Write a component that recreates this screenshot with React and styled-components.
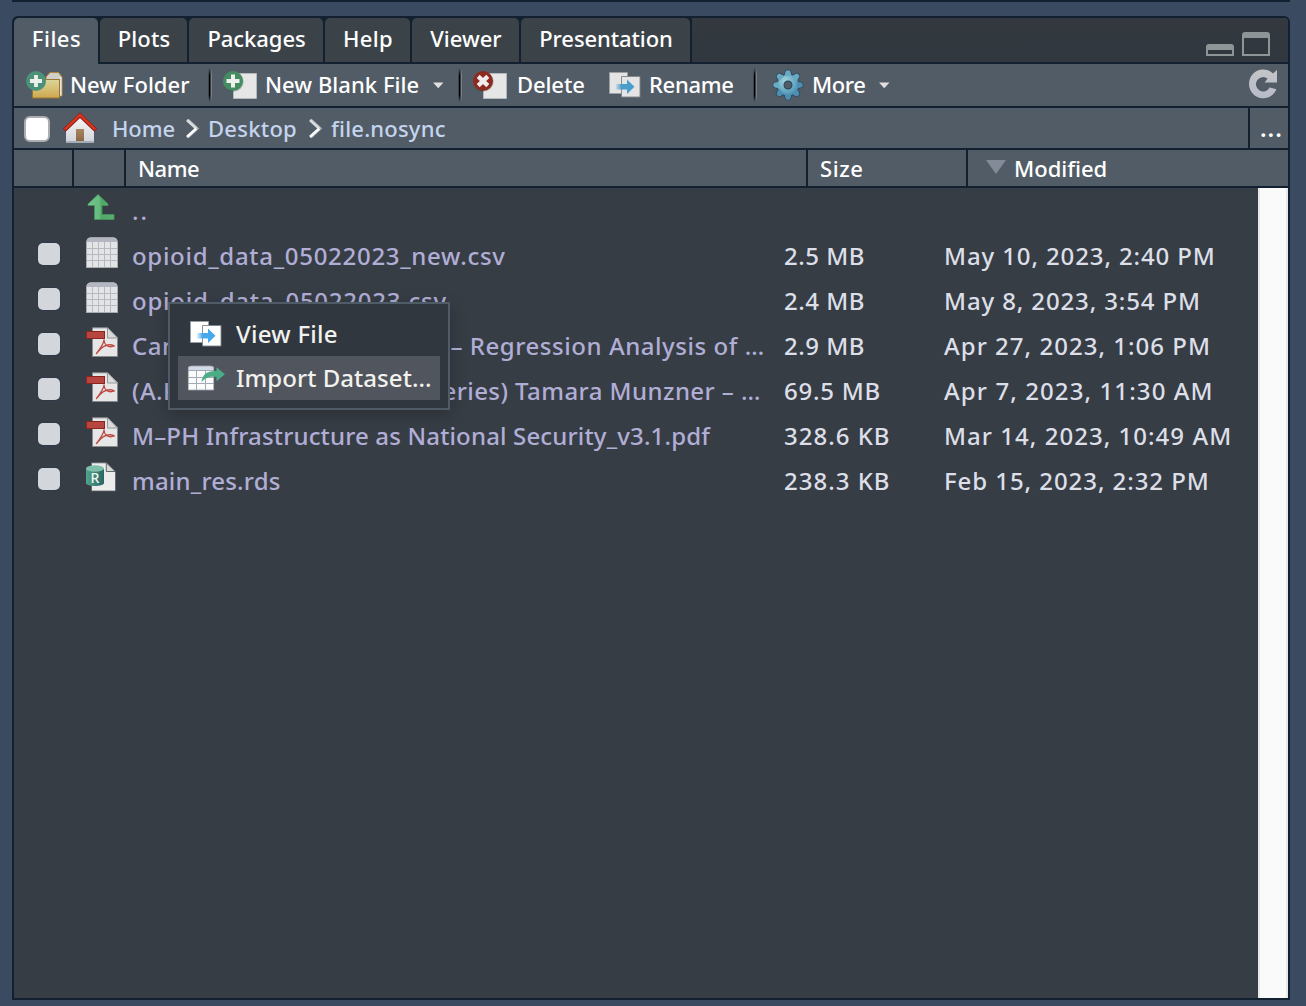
import React from 'react';
import styled, { createGlobalStyle } from 'styled-components';

const LINE = '#13202f';
const BAR = '#525c66';

const Global = createGlobalStyle`
  *, *::before, *::after { box-sizing: border-box; }
  html, body { margin: 0; padding: 0; background: #3a4b61; }
  body { font-family: "Noto Sans", "Open Sans", sans-serif; overflow: hidden; }
  svg { display: block; flex: none; overflow: visible; }
`;

const Screen = styled.div`
  width: 1306px;
  height: 1006px;
  padding-left: 12px;
  display: flex;
  flex-direction: column;
  background: #3a4b61;
`;

const UpperPaneEdge = styled.div`
  width: 1278px;
  height: 2px;
  margin-bottom: 14px;
  background: ${LINE};
`;

const Pane = styled.section`
  width: 1278px;
  height: 984px;
  display: flex;
  flex-direction: column;
  border: 2px solid ${LINE};
  border-radius: 6px 6px 0 0;
  background: #373d45;
`;

/* ---- tabs ---- */
const TabStrip = styled.nav`
  display: flex;
  height: 46px;
  background: linear-gradient(#33393f, #30373e);
  border-radius: 4px 4px 0 0;
`;

const TabSlot = styled.div`
  display: flex;
  width: ${(p) => p.$w + 2}px;
  padding-right: 2px;
  padding-bottom: ${(p) => (p.$active ? 0 : 2)}px;
  background: ${LINE};
`;

const Tab = styled.div`
  flex: 1;
  height: ${(p) => (p.$active ? 46 : 44)}px;
  padding-left: 1px;
  padding-bottom: ${(p) => (p.$active ? 7 : 5)}px;
  display: flex;
  align-items: center;
  justify-content: center;
  border-radius: 5px 5px 0 0;
  background: ${(p) => (p.$active ? BAR : '#3b4349')};
  color: #fff;
  font-size: 22px;
  font-weight: 500;
  line-height: 30px;
  letter-spacing: ${(p) => p.$ls}px;
  white-space: nowrap;
`;

const StripEnd = styled.div`
  flex: 1;
  display: flex;
  justify-content: flex-end;
  align-items: flex-start;
  gap: 8px;
  padding: 14px 18px 0 0;
  border-bottom: 2px solid ${LINE};
`;

/* ---- toolbar ---- */
const Toolbar = styled.div`
  height: 44px;
  display: flex;
  align-items: center;
  padding-left: 12px;
  background: ${BAR};
  border-bottom: 2px solid ${LINE};
`;

const ToolButton = styled.div`
  display: grid;
  grid-template-columns: ${(p) => p.$icon}px ${(p) => p.$text}px auto;
  align-items: center;
  height: 42px;
  margin-right: ${(p) => p.$gap || 0}px;
`;

const ToolLabel = styled.span`
  padding-bottom: 2px;
  color: #fff;
  font-size: 22px;
  font-weight: 500;
  line-height: 30px;
  letter-spacing: ${(p) => p.$ls || 0}px;
  white-space: nowrap;
`;

const Separator = styled.div`
  width: 4px;
  height: 34px;
  margin-right: ${(p) => p.$gap}px;
  background: linear-gradient(90deg, rgba(0,0,0,.25) 0 1px, #000 1px 2px, rgba(0,0,0,.35) 2px 3px, rgba(255,255,255,.22) 3px 4px);
  mask-image: linear-gradient(transparent, #000 22%, #000 80%, transparent);
`;

const RefreshSlot = styled.div`
  margin-left: auto;
  padding: 0 11px 2px 0;
`;

/* ---- breadcrumb ---- */
const PathBar = styled.div`
  height: 42px;
  display: flex;
  align-items: center;
  background: ${BAR};
  border-bottom: 2px solid ${LINE};
`;

const HomeLink = styled.div`
  display: grid;
  grid-template-columns: 49px 74px;
  align-items: center;
`;

const SelectAll = styled.div`
  width: 26px;
  height: 26px;
  margin: 2px 13px 0 10px;
  background: #fff;
  border: 2px solid #adadad;
  border-radius: 6px;
`;

const Crumb = styled.span`
  width: ${(p) => p.$w}px;
  color: #c4d4ee;
  font-size: 22px;
  font-weight: 500;
  line-height: 30px;
  letter-spacing: ${(p) => p.$ls}px;
  white-space: nowrap;
`;

const BrowseButton = styled.div`
  width: 40px;
  height: 40px;
  margin-left: auto;
  padding: 8px 0 0 10px;
  border-left: 2px solid ${LINE};
  color: #fff;
  font-size: 24px;
  font-weight: 600;
  line-height: 24px;
  letter-spacing: 1px;
`;

/* ---- column header ---- */
const HeaderRow = styled.div`
  display: grid;
  grid-template-columns: 60px 52px 682px 160px 1fr;
  height: 38px;
  background: ${BAR};
  border-bottom: 2px solid ${LINE};
`;

const HeaderCell = styled.div`
  display: flex;
  align-items: center;
  gap: 8px;
  height: 36px;
  padding-left: ${(p) => p.$pad || 0}px;
  border-right: ${(p) => (p.$last ? 'none' : `2px solid ${LINE}`)};
  color: #fff;
  font-size: 22px;
  font-weight: 500;
  line-height: 30px;
  letter-spacing: ${(p) => p.$ls || 0}px;
`;

/* ---- listing ---- */
const Body = styled.div`
  flex: 1;
  display: flex;
  min-height: 0;
`;

const Listing = styled.div`
  position: relative;
  flex: 1;
`;

const ScrollTrack = styled.div`
  width: 30px;
  background: #fafafa;
  border: solid #e8e8e8;
  border-width: 0 2px;
`;

const Row = styled.div`
  display: grid;
  grid-template-columns: 72px 46px 652px 159px 1fr;
  height: 45px;
  align-items: start;
  font-size: 24px;
  font-weight: 500;
  line-height: 45px;
`;

const Check = styled.div`
  width: 22px;
  height: 22px;
  margin: 10px 0 0 24px;
  border-radius: 5px;
  background: #d3d7dc;
  box-shadow: 0 0 0 1px #2f3949;
`;

const IconCell = styled.div`
  padding-top: 4px;
`;

const FileName = styled.div`
  color: #b1aed6;
  letter-spacing: ${(p) => p.$ls}px;
  white-space: pre;
`;

const Meta = styled.div`
  padding-left: ${(p) => p.$pad || 0}px;
  color: #dcdfe8;
  letter-spacing: ${(p) => p.$ls}px;
  white-space: pre;
`;

/* ---- context menu ---- */
const Menu = styled.div`
  position: absolute;
  left: 154px;
  top: 114px;
  width: 282px;
  height: 108px;
  padding: 8px;
  border: 2px solid #4f5b66;
  background: #30373f;
  box-shadow: 0 4px 16px rgba(0, 0, 0, .22);
`;

const MenuItem = styled.div`
  height: 44px;
  display: grid;
  grid-template-columns: ${(p) => 58 - p.$pad}px 1fr;
  align-items: center;
  padding-left: ${(p) => p.$pad}px;
  background: ${(p) => (p.$active ? '#51555d' : 'transparent')};
  color: #f1f1ee;
  font-size: 24px;
  font-weight: 500;
  line-height: 44px;
  letter-spacing: ${(p) => p.$ls}px;
  white-space: nowrap;
`;

/* ---- icons ---- */
const MinimizeIcon = () => (
  <svg width="28" height="24" viewBox="0 0 28 24">
    <path d="M0 24V15a3 3 0 0 1 3-3h22a3 3 0 0 1 3 3v9zM2 18v4h24v-4z" fill="#8d9597" fillRule="evenodd" />
  </svg>
);

const MaximizeIcon = () => (
  <svg width="28" height="24" viewBox="0 0 28 24">
    <path d="M0 24V3a3 3 0 0 1 3-3h22a3 3 0 0 1 3 3v21zM2 6v16h24V6z" fill="#8d9597" fillRule="evenodd" />
  </svg>
);

const FolderAddIcon = () => (
  <svg width="38" height="30" viewBox="0 0 38 30">
    <defs>
      <linearGradient id="fold" x1="0" y1="0" x2="0" y2="1">
        <stop offset="0" stopColor="#dcd69a" />
        <stop offset="1" stopColor="#cfa84f" />
      </linearGradient>
    </defs>
    <path d="M20 12V7l4-4.500h8.500l3.500 4.500v19h-3" fill="#d0d0c9" stroke="#b0863a" />
    <path d="M34.500 7v18.500" stroke="#e4e4e0" strokeWidth="2" />
    <rect x="6.500" y="9.500" width="27" height="18.500" fill="url(#fold)" stroke="#99752f" />
    <circle cx="10" cy="11" r="10" fill="#4b9279" />
    <path d="M10 5v12M4 11h12" stroke="#ecf0ed" strokeWidth="3.800" />
  </svg>
);

const FileAddIcon = () => (
  <svg width="34" height="30" viewBox="0 0 34 30">
    <rect x="10.500" y="3.500" width="23" height="25" fill="#e6e6e6" stroke="#b9bdc1" strokeWidth=".8" />
    <circle cx="10.700" cy="11.600" r="10" fill="#000" opacity=".2" />
    <circle cx="10" cy="11" r="10" fill="#458c60" />
    <path d="M10 4.500v13M3.500 11h13" stroke="#eef1ee" strokeWidth="4" />
  </svg>
);

const DeleteIcon = () => (
  <svg width="34" height="30" viewBox="0 0 34 30">
    <rect x="10.500" y="3.500" width="23" height="25" fill="#e6e6e6" stroke="#b9bdc1" strokeWidth=".8" />
    <circle cx="10.700" cy="11.600" r="10" fill="#000" opacity=".2" />
    <circle cx="10" cy="11" r="10" fill="#8d2a20" />
    <path d="M5.200 6.400l9.600 9.200M14.800 6.400l-9.600 9.200" stroke="#f0eceb" strokeWidth="4.300" />
  </svg>
);

const MoveIcon = ({ paper, arrow, id }) => (
  <svg width="32" height="26" viewBox="0 0 32 26">
    <defs>
      <linearGradient id={id} x1="0" y1="0" x2="1" y2="0">
        <stop offset="0" stopColor={arrow} stopOpacity=".15" />
        <stop offset=".3" stopColor={arrow} />
      </linearGradient>
    </defs>
    <path d="M.5 .5h18v21H.5z" fill={paper} stroke="#9aa0a5" strokeWidth=".9" />
    <path d="M12.500 4.500h18.500v20.500h-18.500z" fill={paper} stroke="#7d848a" strokeWidth=".9" />
    <path d="M7 12h11V7.500l7.500 7.300L18 22v-4.500H7z" fill={`url(#${id})`} />
  </svg>
);

const GEAR_TEETH = [0, 45, 90, 135, 180, 225, 270, 315];
const TOOTH = 'M-4-9C-2.600-10.500-3-13-2-14.200Q0-15.400 2-14.200C3-13 2.600-10.500 4-9z';
const GearIcon = () => (
  <svg width="30" height="32" viewBox="-15 -16 30 32">
    <defs>
      <radialGradient id="gear" gradientUnits="userSpaceOnUse" cx="-3" cy="-4" r="19">
        <stop offset="0" stopColor="#a3d3dc" />
        <stop offset=".5" stopColor="#6aabc6" />
        <stop offset="1" stopColor="#3d7fa5" />
      </radialGradient>
    </defs>
    <g fill="#28455a" stroke="#28455a" strokeWidth="1.400" strokeLinejoin="round">
      <circle r="10.300" />
      {GEAR_TEETH.map((a) => (
        <path key={a} transform={`rotate(${a})`} d={TOOTH} />
      ))}
    </g>
    <circle r="10.300" fill="url(#gear)" />
    {GEAR_TEETH.map((a) => (
      <path key={a} transform={`rotate(${a})`} d={TOOTH} fill={a > 60 && a < 240 ? '#4c8fb3' : '#68a9c4'} />
    ))}
    <circle r="3.900" fill="#525c66" stroke="#2d4a5c" strokeWidth="1.200" />
  </svg>
);

const Caret = () => (
  <svg width="11" height="6" viewBox="0 0 11 6">
    <path d="M0 .5h10.500L5.250 6.300z" fill="#e3dde0" />
  </svg>
);

const RefreshIcon = () => (
  <svg width="28" height="30" viewBox="0 0 28 30">
    <defs>
      <linearGradient id="refresh" x1="0" y1="0" x2="0" y2="1">
        <stop offset="0" stopColor="#c3c4c6" />
        <stop offset="1" stopColor="#b7bccb" />
      </linearGradient>
    </defs>
    <path d="M28 1V13.400H15.600L18.600 9.600A7.200 7.200 0 1 0 20.600 18.400L27.400 20.200A14.200 14.400 0 1 1 24 4.400z" fill="url(#refresh)" />
  </svg>
);

const HouseIcon = () => (
  <svg width="34" height="30" viewBox="0 0 34 30">
    <defs>
      <linearGradient id="wall" x1="0" y1="0" x2="0" y2="1">
        <stop offset="0" stopColor="#f6f6f8" />
        <stop offset="1" stopColor="#d3d5dc" />
      </linearGradient>
      <linearGradient id="door" x1="0" y1="0" x2="0" y2="1">
        <stop offset="0" stopColor="#a98763" />
        <stop offset="1" stopColor="#8a6845" />
      </linearGradient>
    </defs>
    <path d="M3 17L17 3.500 31 17v12H3z" fill="url(#wall)" />
    <path d="M3 29h28" stroke="#a5adb8" strokeWidth="2" />
    <rect x="13" y="16" width="8" height="12" fill="url(#door)" />
    <path d="M1.300 17.300L17 2.200l15.700 15.100" fill="none" stroke="#8e1b10" strokeWidth="4" />
    <path d="M1.700 16.700L17 2l15.300 14.700" fill="none" stroke="#d93521" strokeWidth="2.400" />
  </svg>
);

const Chevron = () => (
  <svg width="22" height="20" viewBox="0 0 22 20">
    <path d="M1.500 2l9.300 8.500-9.300 8.500" fill="none" stroke="#a5abb1" strokeWidth="3.400" />
    <path d="M1 2L10.300 10.500" fill="none" stroke="#d9dcdf" strokeWidth="2.400" />
    <path d="M10.300 10.500L1 19" fill="none" stroke="#fff" strokeWidth="2.400" />
  </svg>
);

const SortArrow = () => (
  <svg width="20" height="14" viewBox="0 0 20 14">
    <path d="M0 -1h20L10 13z" fill="#838a98" />
  </svg>
);

const UpIcon = () => (
  <svg width="32" height="30" viewBox="0 0 32 30">
    <defs>
      <linearGradient id="up" x1="0" y1="0" x2="1" y2="0">
        <stop offset="0" stopColor="#76c58f" />
        <stop offset=".45" stopColor="#66b97e" />
        <stop offset=".5" stopColor="#4fa867" />
        <stop offset="1" stopColor="#56b06e" />
      </linearGradient>
    </defs>
    <path d="M12 2.500L22 12v1.500h-6v9h12v5H8.500v-14H2V12z" fill="url(#up)" stroke="#46945c" strokeWidth=".8" />
  </svg>
);

const CsvIcon = () => (
  <svg width="32" height="32" viewBox="0 0 32 32">
    <path d="M.4 31V5a4.500 4.500 0 0 1 4.500-4.500h22.200A4.500 4.500 0 0 1 31.600 5v26z" fill="#e3e4e6" />
    <path d="M.5 5V4.700A4.500 4.500 0 0 1 5 .5h22A4.500 4.500 0 0 1 31.500 4.700V5z" fill="#b4b7c2" />
    <path d="M.5 11.500h31M.5 17.500h31M.5 23.500h31M6.500 5v25M12.500 5v25M18.500 5v25M24.500 5v25" stroke="#b6bac0" />
    <path d="M.5 30.500V5M31.500 30.500V5M0 30.500h32" stroke="#a8acb1" fill="none" />
  </svg>
);

const PdfIcon = () => (
  <svg width="32" height="32" viewBox="0 0 32 32">
    <path d="M6.500 .8H21.500l10 10v18.700h-25z" fill="#e6e6e6" stroke="#878a8c" />
    <path d="M21.500 .8V11h10z" fill="#dadada" stroke="#96999b" />
    <path d="M10.500 26.500c3-4 7.500-10 7.500-13.500 0 4 3.500 8.500 10.500 6-6-3-12-.5-18 7.500z" fill="none" stroke="#bd4942" strokeWidth="1.300" strokeLinejoin="round" />
    <rect x=".5" y="4.500" width="18" height="7" fill="#b84640" stroke="#8c2520" />
  </svg>
);

const RLetter = styled.text`
  font-family: "Noto Sans", sans-serif;
  font-size: 14px;
  fill: #f1f5f3;
`;

const RdsIcon = () => (
  <svg width="32" height="32" viewBox="0 0 32 32">
    <defs>
      <linearGradient id="drum" x1="0" y1="0" x2="1" y2="0">
        <stop offset="0" stopColor="#53a58e" />
        <stop offset=".5" stopColor="#3b8676" />
        <stop offset="1" stopColor="#2b6464" />
      </linearGradient>
    </defs>
    <path d="M5.500 .8H20.500L29.500 10v19h-24z" fill="#ececec" stroke="#5c6063" strokeWidth=".8" />
    <path d="M20.300 .8V9.500h9z" fill="#d8d8d8" stroke="#55595c" strokeWidth=".9" />
    <path d="M0 6.500v14.500c0 4 18 4 18 0V6.500z" fill="url(#drum)" />
    <ellipse cx="9" cy="6.500" rx="9" ry="3.300" fill="#7fc0aa" />
    <RLetter x="4.600" y="20.500">R</RLetter>
  </svg>
);

const ImportIcon = () => (
  <svg width="38" height="26" viewBox="0 0 38 26">
    <path d="M0 25V4a3 3 0 0 1 3-3h20a3 3 0 0 1 3 3v21z" fill="#fbfbfb" />
    <path d="M0 6V4a3 3 0 0 1 3-3h20a3 3 0 0 1 3 3v2z" fill="#d5dbe6" />
    <path d="M0 5.500h26M0 12.500h26M0 18.500h26M8.500 5.500V25M17.500 5.500V25" stroke="#a1abb8" />
    <path d="M.4 25V4a3 3 0 0 1 3-3h19.200a3 3 0 0 1 3 3v21z" fill="none" stroke="#9aa2ac" strokeWidth=".8" />
    <path d="M13.500 17c1-8 6-11.500 15-11V2.300l8.500 7-8.500 7V12c-6.500-1-11 0-15 5z" fill="#4aad85" />
  </svg>
);

/* ---- data ---- */
const TABS = [
  { label: 'Files', w: 84, ls: 0.5, active: true },
  { label: 'Plots', w: 87, ls: 0.1 },
  { label: 'Packages', w: 134, ls: -0.05 },
  { label: 'Help', w: 85, ls: 0.3 },
  { label: 'Viewer', w: 107, ls: 0 },
  { label: 'Presentation', w: 169, ls: -0.1 },
];

const FILES = [
  { icon: <CsvIcon />, name: 'opioid_data_05022023_new.csv', ls: 0.7, size: '2.5 MB', sls: 0.5, date: 'May 10, 2023, 2:40 PM', dls: 0.88 },
  { icon: <CsvIcon />, name: 'opioid_data_05022023.csv', ls: 0.75, size: '2.4 MB', sls: 0.5, date: 'May 8, 2023, 3:54 PM', dls: 0.87 },
  { icon: <PdfIcon />, name: 'Cameron A. C., Trivedi P.K. – Regression Analysis of …', ls: 0.55, size: '2.9 MB', sls: 0.5, date: 'Apr 27, 2023, 1:06 PM', dls: 1.02 },
  { icon: <PdfIcon />, name: '(A.K. Peters visualization series) Tamara Munzner – …', ls: 0.44, size: '69.5 MB', sls: 0.75, date: 'Apr 7, 2023, 11:30 AM', dls: 1.1 },
  { icon: <PdfIcon />, name: 'M–PH Infrastructure as National Security_v3.1.pdf', ls: 0.16, size: '328.6 KB', sls: 1, date: 'Mar 14, 2023, 10:49 AM', dls: 1.03 },
  { icon: <RdsIcon />, name: 'main_res.rds', ls: 0.2, size: '238.3 KB', sls: 1, date: 'Feb 15, 2023, 2:32 PM', dls: 0.93 },
];

export default function App() {
  return (
    <Screen>
      <Global />
      <UpperPaneEdge />
      <Pane>
        <TabStrip>
          {TABS.map((t) => (
            <TabSlot key={t.label} $w={t.w} $active={t.active}>
              <Tab $active={t.active} $ls={t.ls}>{t.label}</Tab>
            </TabSlot>
          ))}
          <StripEnd>
            <MinimizeIcon />
            <MaximizeIcon />
          </StripEnd>
        </TabStrip>

        <Toolbar>
          <ToolButton $icon={44} $text={138}>
            <FolderAddIcon />
            <ToolLabel $ls={0.02}>New Folder</ToolLabel>
          </ToolButton>
          <Separator $gap={11} />
          <ToolButton $icon={42} $text={168} $gap={14}>
            <FileAddIcon />
            <ToolLabel $ls={0.05}>New Blank File</ToolLabel>
            <Caret />
          </ToolButton>
          <Separator $gap={11} />
          <ToolButton $icon={44} $text={92}>
            <DeleteIcon />
            <ToolLabel $ls={-0.1}>Delete</ToolLabel>
          </ToolButton>
          <ToolButton $icon={40} $text={104}>
            <MoveIcon paper="#e4e4e4" arrow="#4a9ccb" id="rename" />
            <ToolLabel $ls={-0.3}>Rename</ToolLabel>
          </ToolButton>
          <Separator $gap={16} />
          <ToolButton $icon={39} $text={67}>
            <GearIcon />
            <ToolLabel $ls={-0.4}>More</ToolLabel>
            <Caret />
          </ToolButton>
          <RefreshSlot>
            <RefreshIcon />
          </RefreshSlot>
        </Toolbar>

        <PathBar>
          <SelectAll />
          <HomeLink>
            <HouseIcon />
            <Crumb $w={74} $ls={-0.1}>Home</Crumb>
          </HomeLink>
          <Chevron />
          <Crumb $w={101} $ls={0.25}>Desktop</Crumb>
          <Chevron />
          <Crumb $w={120} $ls={0.2}>file.nosync</Crumb>
          <BrowseButton>...</BrowseButton>
        </PathBar>

        <HeaderRow>
          <HeaderCell />
          <HeaderCell />
          <HeaderCell $pad={12} $ls={-0.5}>Name</HeaderCell>
          <HeaderCell $pad={12} $ls={0.6}>Size</HeaderCell>
          <HeaderCell $last $pad={18} $ls={0}>
            <SortArrow />
            <span>Modified</span>
          </HeaderCell>
        </HeaderRow>

        <Body>
          <Listing>
            <Row>
              <span />
              <IconCell><UpIcon /></IconCell>
              <FileName $ls={2}>..</FileName>
            </Row>
            {FILES.map((f) => (
              <Row key={f.name}>
                <Check />
                <IconCell>{f.icon}</IconCell>
                <FileName $ls={f.ls}>{f.name}</FileName>
                <Meta $ls={f.sls}>{f.size}</Meta>
                <Meta $ls={f.dls} $pad={1}>{f.date}</Meta>
              </Row>
            ))}
            <Menu>
              <MenuItem $ls={0.25} $pad={12}>
                <MoveIcon paper="#fff" arrow="#48a8ec" id="view" />
                <span>View File</span>
              </MenuItem>
              <MenuItem $active $ls={0.05} $pad={10}>
                <ImportIcon />
                <span>Import Dataset...</span>
              </MenuItem>
            </Menu>
          </Listing>
          <ScrollTrack />
        </Body>
      </Pane>
    </Screen>
  );
}
